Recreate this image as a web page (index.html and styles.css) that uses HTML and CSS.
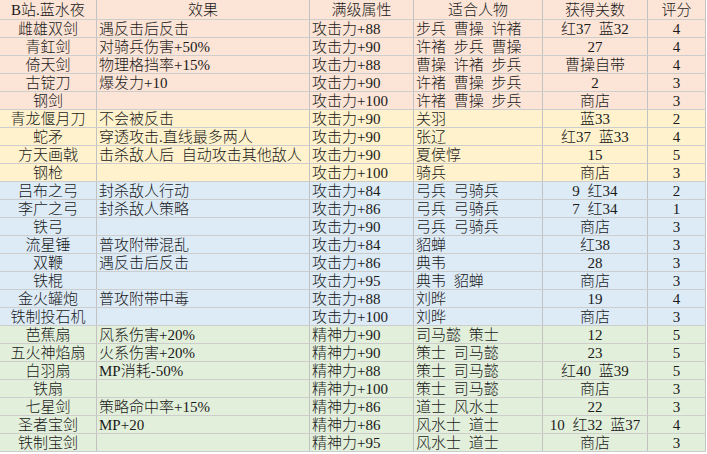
FILE: index.html
```html
<!DOCTYPE html>
<html lang="zh-CN">
<head>
<meta charset="utf-8">
<title>武器表</title>
<link rel="stylesheet" href="styles.css">
</head>
<body>
<div class="sheet">
  <div class="row head pink"><div class="ctr">B站.蓝水夜</div><div class="ctr">效果</div><div class="ctr">满级属性</div><div class="ctr">适合人物</div><div class="ctr">获得关数</div><div class="ctr">评分</div></div>

  <div class="row pink"><div class="ctr">雌雄双剑</div><div>遇反击后反击</div><div>攻击力+88</div><div>步兵 曹操 许褚</div><div class="ctr">红37 蓝32</div><div class="ctr">4</div></div>
  <div class="row pink"><div class="ctr">青釭剑</div><div>对骑兵伤害+50%</div><div>攻击力+90</div><div>许褚 步兵 曹操</div><div class="ctr">27</div><div class="ctr">4</div></div>
  <div class="row pink"><div class="ctr">倚天剑</div><div>物理格挡率+15%</div><div>攻击力+88</div><div>曹操 许褚 步兵</div><div class="ctr">曹操自带</div><div class="ctr">4</div></div>
  <div class="row pink"><div class="ctr">古锭刀</div><div>爆发力+10</div><div>攻击力+90</div><div>许褚 曹操 步兵</div><div class="ctr">2</div><div class="ctr">3</div></div>
  <div class="row pink"><div class="ctr">钢剑</div><div></div><div>攻击力+100</div><div>许褚 曹操 步兵</div><div class="ctr">商店</div><div class="ctr">3</div></div>

  <div class="row yellow"><div class="ctr">青龙偃月刀</div><div>不会被反击</div><div>攻击力+90</div><div>关羽</div><div class="ctr">蓝33</div><div class="ctr">2</div></div>
  <div class="row yellow"><div class="ctr">蛇矛</div><div>穿透攻击.直线最多两人</div><div>攻击力+90</div><div>张辽</div><div class="ctr">红37 蓝33</div><div class="ctr">4</div></div>
  <div class="row yellow"><div class="ctr">方天画戟</div><div>击杀敌人后 自动攻击其他敌人</div><div>攻击力+90</div><div>夏侯惇</div><div class="ctr">15</div><div class="ctr">5</div></div>
  <div class="row yellow"><div class="ctr">钢枪</div><div></div><div>攻击力+100</div><div>骑兵</div><div class="ctr">商店</div><div class="ctr">3</div></div>

  <div class="row blue"><div class="ctr">吕布之弓</div><div>封杀敌人行动</div><div>攻击力+84</div><div>弓兵 弓骑兵</div><div class="ctr">9 红34</div><div class="ctr">2</div></div>
  <div class="row blue"><div class="ctr">李广之弓</div><div>封杀敌人策略</div><div>攻击力+86</div><div>弓兵 弓骑兵</div><div class="ctr">7 红34</div><div class="ctr">1</div></div>
  <div class="row blue"><div class="ctr">铁弓</div><div></div><div>攻击力+90</div><div>弓兵 弓骑兵</div><div class="ctr">商店</div><div class="ctr">3</div></div>
  <div class="row blue"><div class="ctr">流星锤</div><div>普攻附带混乱</div><div>攻击力+84</div><div>貂蝉</div><div class="ctr">红38</div><div class="ctr">3</div></div>
  <div class="row blue"><div class="ctr">双鞭</div><div>遇反击后反击</div><div>攻击力+86</div><div>典韦</div><div class="ctr">28</div><div class="ctr">3</div></div>
  <div class="row blue"><div class="ctr">铁棍</div><div></div><div>攻击力+95</div><div>典韦 貂蝉</div><div class="ctr">商店</div><div class="ctr">3</div></div>
  <div class="row blue"><div class="ctr">金火罐炮</div><div>普攻附带中毒</div><div>攻击力+88</div><div>刘晔</div><div class="ctr">19</div><div class="ctr">4</div></div>
  <div class="row blue"><div class="ctr">铁制投石机</div><div></div><div>攻击力+100</div><div>刘晔</div><div class="ctr">商店</div><div class="ctr">3</div></div>

  <div class="row green"><div class="ctr">芭蕉扇</div><div>风系伤害+20%</div><div>精神力+90</div><div>司马懿 策士</div><div class="ctr">12</div><div class="ctr">5</div></div>
  <div class="row green"><div class="ctr">五火神焰扇</div><div>火系伤害+20%</div><div>精神力+90</div><div>策士 司马懿</div><div class="ctr">23</div><div class="ctr">5</div></div>
  <div class="row green"><div class="ctr">白羽扇</div><div>MP消耗-50%</div><div>精神力+88</div><div>策士 司马懿</div><div class="ctr">红40 蓝39</div><div class="ctr">5</div></div>
  <div class="row green"><div class="ctr">铁扇</div><div></div><div>精神力+100</div><div>策士 司马懿</div><div class="ctr">商店</div><div class="ctr">3</div></div>
  <div class="row green"><div class="ctr">七星剑</div><div>策略命中率+15%</div><div>精神力+86</div><div>道士 风水士</div><div class="ctr">22</div><div class="ctr">3</div></div>
  <div class="row green"><div class="ctr">圣者宝剑</div><div>MP+20</div><div>精神力+86</div><div>风水士 道士</div><div class="ctr">10 红32 蓝37</div><div class="ctr">4</div></div>
  <div class="row green"><div class="ctr">铁制宝剑</div><div></div><div>精神力+95</div><div>风水士 道士</div><div class="ctr">商店</div><div class="ctr">3</div></div>
</div>
</body>
</html>
```

FILE: styles.css
```css
html, body {
  margin: 0;
  padding: 0;
  background: #ffffff;
}

body {
  font-family: "Liberation Serif", "Noto Sans CJK SC", serif;
  font-size: 15px;
  font-weight: 300;
  color: #1a1a1a;
  word-spacing: 4px;
}

.sheet {
  width: 706px;
}

.row {
  display: grid;
  grid-template-columns: 97px 213px 104px 129px 105px 58px;
  height: 18px;
  box-sizing: border-box;
  border-bottom: 1px solid #cdcdcd;
}

.row > div {
  box-sizing: border-box;
  border-right: 1px solid #c2c2c2;
  padding: 0 2px;
  line-height: 18px;
  white-space: nowrap;
  overflow: hidden;
}

.head {
  height: 20px;
}

.head > div {
  line-height: 21px;
}

.ctr {
  text-align: center;
}

.pink { background: #fce4d6; }
.yellow { background: #fff2cc; }
.blue { background: #ddebf7; }
.green { background: #e2efda; }
```
